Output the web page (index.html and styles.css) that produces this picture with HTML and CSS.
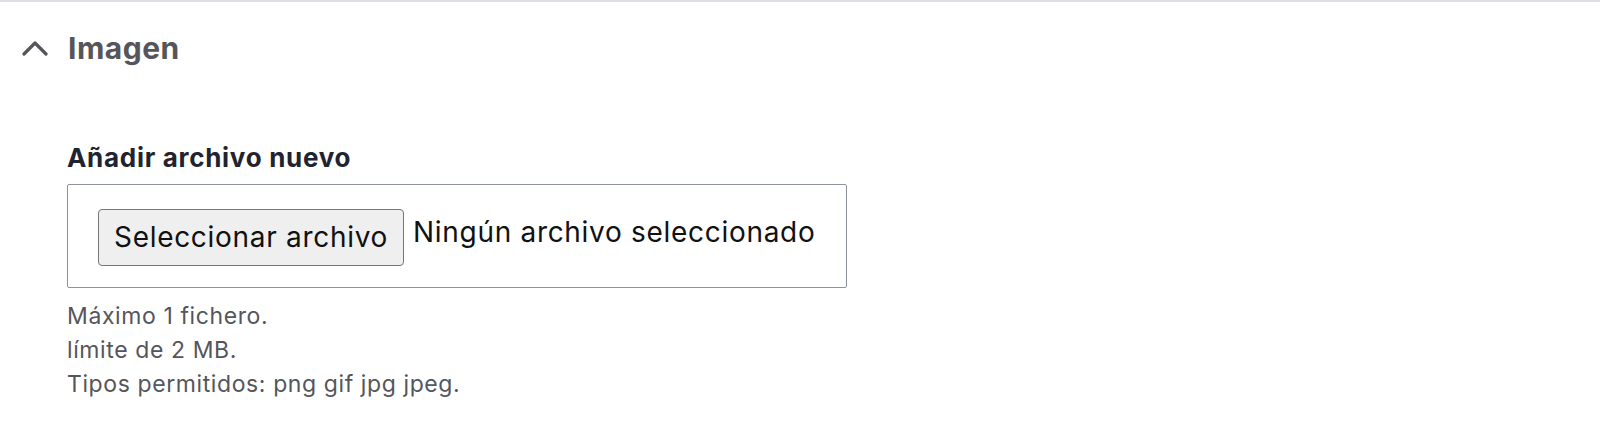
FILE: index.html
```html
<!DOCTYPE html>
<html lang="es">
  <head>
    <meta charset="UTF-8" />
    <meta name="viewport" content="width=device-width, initial-scale=1.0" />
    <title>Imagen</title>
    <link rel="stylesheet" href="styles.css">
  </head>
  <body>
    <div class="details">
      <div class="summary">
        <svg class="chevron" width="26" height="16" viewBox="0 0 26 16">
          <polyline points="2,14 13,3 24,14" />
        </svg>
        <span class="summary-title">Imagen</span>
      </div>

      <div class="details-body">
        <div class="form-item">
          <label class="form-label" for="upload">Añadir archivo nuevo</label>
          <div class="file-widget">
            <button type="button" id="upload" class="file-button">Seleccionar archivo</button>
            <span class="file-status">Ningún archivo seleccionado</span>
          </div>
          <div class="description">
            Máximo 1 fichero.<br />
            límite de 2 MB.<br />
            Tipos permitidos: png gif jpg jpeg.
          </div>
        </div>
      </div>
    </div>
  </body>
</html>
```

FILE: styles.css
```css
body {
  margin: 0;
  background-color: #fff;
  font-family: Inter, "Noto Sans", sans-serif;
  color: #222330;
}

.details {
  border-top: 2px solid #dedfe4;
}

.summary {
  display: flex;
  align-items: center;
  padding: 28px 0 0 22px;
  height: 36px;
}

.chevron {
  fill: none;
  stroke: #55565b;
  stroke-width: 3.2;
  stroke-linecap: round;
  stroke-linejoin: round;
  margin-right: 20px;
}

.summary-title {
  font-size: 30px;
  line-height: 36px;
  font-weight: 700;
  letter-spacing: 0.5px;
  color: #55565b;
}

.details-body {
  padding: 76px 0 0 67px;
}

.form-label {
  display: block;
  font-size: 26px;
  line-height: 32px;
  font-weight: 700;
  letter-spacing: 0.7px;
  color: #222330;
  margin-bottom: 10px;
}

.file-widget {
  display: flex;
  align-items: center;
  box-sizing: border-box;
  width: 780px;
  height: 104px;
  padding: 0 0 0 30px;
  border: 1px solid #8e929c;
  border-radius: 2px;
}

.file-button {
  box-sizing: border-box;
  height: 57px;
  width: 306px;
  padding: 0;
  margin-top: 2px;
  font-family: inherit;
  font-size: 28px;
  letter-spacing: 0.7px;
  color: #111;
  background-color: #efefef;
  border: 1px solid #767676;
  border-radius: 4px;
}

.file-status {
  margin-left: 9px;
  margin-bottom: 8px;
  font-size: 28px;
  letter-spacing: 0.7px;
  color: #111;
}

.description {
  margin-top: 11px;
  font-size: 23px;
  line-height: 34px;
  letter-spacing: 0.6px;
  color: #55565b;
}
```
